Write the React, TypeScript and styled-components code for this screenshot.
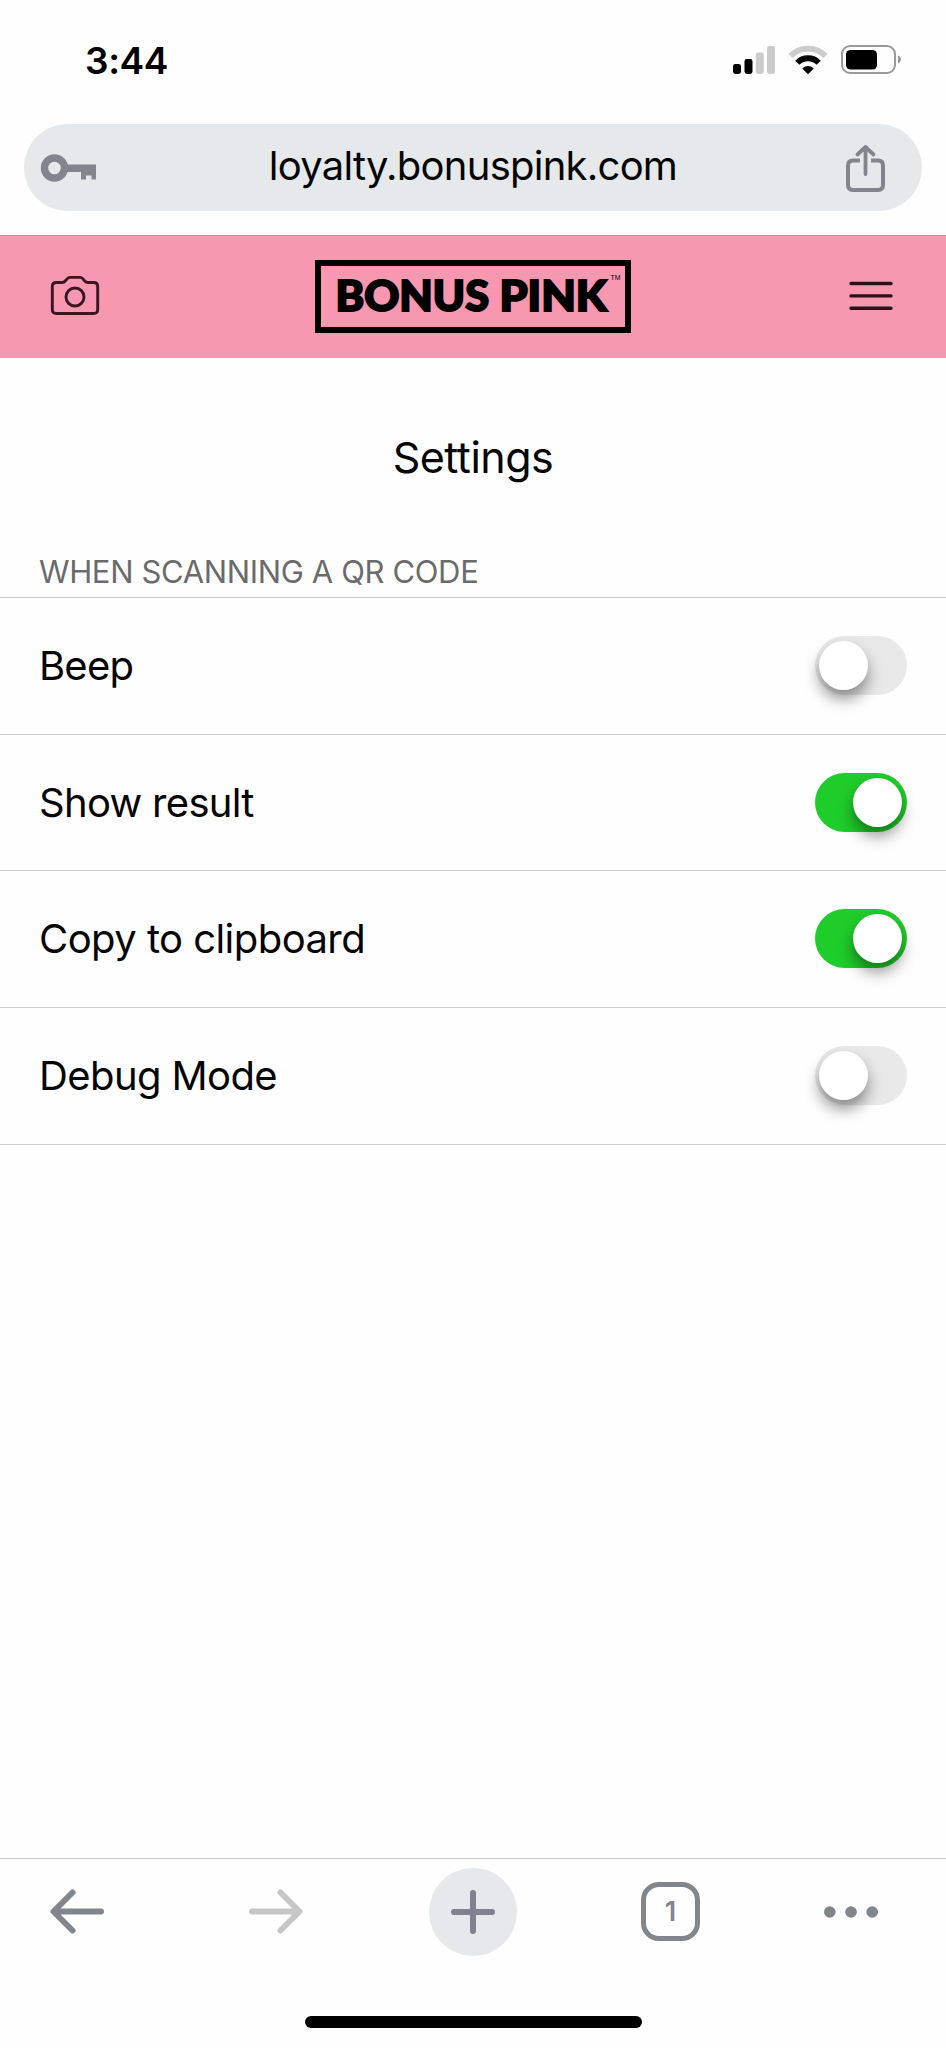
import React, { useState } from "react";
import styled, { createGlobalStyle } from "styled-components";

const GlobalStyle = createGlobalStyle`
  * { box-sizing: border-box; }
  html, body { margin: 0; padding: 0; background: #fefefe; }
  body { font-family: Inter, "Liberation Sans", sans-serif; color: #050505; }
  button { border: 0; padding: 0; background: none; font: inherit; color: inherit; }
  svg { display: block; overflow: visible; }
`;

const Screen = styled.div`
  display: flex;
  flex-direction: column;
  width: 946px;
  height: 2048px;
  overflow: hidden;
  background: #fefefe;
`;

const StatusBar = styled.div`
  display: flex;
  align-items: center;
  height: 124px;
  padding: 0 45px 5px 85px;
`;

const Clock = styled.div`
  flex: 1;
  padding-top: 2px;
  font-size: 37px;
  font-weight: 600;
  line-height: 44px;
  letter-spacing: -0.4px;
  color: #000;
`;

const StatusIcons = styled.div`
  display: flex;
  align-items: center;
  gap: 13px;
`;

const AddressBar = styled.div`
  display: flex;
  align-items: center;
  justify-content: space-between;
  height: 87px;
  margin: 0 24px;
  padding: 0 37px 0 17px;
  border-radius: 44px;
  background: #e5e9ec;
`;

const Url = styled.div`
  padding: 0 0 3px 4px;
  font-size: 40px;
  line-height: 48px;
  letter-spacing: -0.75px;
  white-space: nowrap;
`;

const SiteHeader = styled.header`
  display: flex;
  align-items: center;
  justify-content: space-between;
  height: 123px;
  margin-top: 24px;
  padding: 0 53px 2px 51px;
  background: #f797b0;
  border-top: 1px solid #bf8d9a;
  border-bottom: 1px solid #e3a3b3;
`;

const LogoFrame = styled.div`
  width: 316px;
  height: 73px;
  border: 6px solid #000;
  margin: 2px 0 0 -2px;
`;

const Title = styled.h1`
  margin: 73px 0 0;
  font-size: 43px;
  font-weight: 400;
  line-height: 52px;
  text-align: center;
  letter-spacing: -0.5px;
`;

const SectionLabel = styled.h2`
  margin: 70px 0 0;
  height: 45px;
  padding-left: 39px;
  border-bottom: 1px solid #c9c9c9;
  font-size: 31px;
  font-weight: 400;
  line-height: 38px;
  letter-spacing: -0.36px;
  color: #6b6b6b;
`;

const Row = styled.div<{ $h: number }>`
  display: flex;
  align-items: center;
  justify-content: space-between;
  height: ${(p) => p.$h}px;
  padding: 0 39px;
  border-bottom: 1px solid #cdcdcd;
`;

const RowLabel = styled.span<{ $track: number }>`
  font-size: 40px;
  line-height: 48px;
  letter-spacing: ${(p) => p.$track}px;
`;

const Track = styled.button<{ $on: boolean }>`
  display: flex;
  align-items: center;
  justify-content: ${(p) => (p.$on ? "flex-end" : "flex-start")};
  width: 92px;
  height: 59px;
  margin-bottom: 1px;
  padding: 0 5px 0 4px;
  border-radius: 30px;
  background: ${(p) => (p.$on ? "#1fcd2a" : "#e9e9ea")};
`;

const Knob = styled.span`
  width: 49px;
  height: 49px;
  border-radius: 50%;
  background: #fff;
  box-shadow: 0 9px 15px rgba(0, 0, 0, 0.42);
`;

const Content = styled.main`
  flex: 1;
`;

const Toolbar = styled.nav`
  display: grid;
  grid-template-columns: 198.5px 180.5px 212px 183px auto;
  align-items: center;
  height: 158px;
  padding: 0 0 52px 50px;
  border-top: 1px solid #c6c8ca;
`;

const NewTab = styled.button`
  display: flex;
  align-items: center;
  justify-content: center;
  width: 88px;
  height: 88px;
  border-radius: 50%;
  background: #e5e9ec;
`;

const TabCount = styled.button`
  display: flex;
  align-items: center;
  justify-content: center;
  width: 59px;
  height: 59px;
  padding: 1px 0 0;
  border: 5.5px solid #80868b;
  border-radius: 18px;
  font-size: 27px;
  font-weight: 600;
  line-height: 34px;
  color: #80868b;
`;

const HomeIndicator = styled.div`
  width: 337px;
  height: 12px;
  margin: 0 auto 20px;
  border-radius: 6px;
  background: #000;
`;

const Signal = () => (
  <svg width="42" height="28" viewBox="0 0 42 28">
    <rect x="0" y="18" width="8" height="10" rx="2.4" />
    <rect x="11.5" y="13" width="8" height="15" rx="2.4" />
    <rect x="22.8" y="6.5" width="8" height="21.5" rx="2.4" fill="#cbcbcb" />
    <rect x="34" y="0" width="8" height="28" rx="2.4" fill="#cbcbcb" />
  </svg>
);

const Wifi = () => (
  <svg width="40" height="29" viewBox="0 0 40 29" fill="none" strokeWidth="5.8">
    <path d="M2.6 10.9A24.3 24.3 0 0 1 37.4 10.9" stroke="#cbcbcb" />
    <path d="M9.3 17.8A14.9 14.9 0 0 1 30.7 17.8" stroke="#000" />
    <path d="M20 29.3L14.3 23.5A7.8 7.8 0 0 1 25.7 23.5Z" fill="#000" stroke="none" />
  </svg>
);

const Battery = () => (
  <svg width="60" height="29" viewBox="0 0 60 29">
    <rect x="1" y="1" width="53" height="27" rx="8" fill="none" stroke="#999" strokeWidth="2" />
    <rect x="5" y="5" width="31" height="19.5" rx="4.5" />
    <path d="M57 10.5C61 12 61 17 57 18.5Z" fill="#999" />
  </svg>
);

const KeyIcon = () => (
  <svg width="55" height="28" viewBox="0 0 55 28">
    <circle cx="13.5" cy="14" r="10" fill="none" stroke="#80868b" strokeWidth="7.4" />
    <path d="M25 10.5H55V25.5H50.5V21.5H45V25.5H40V18H25Z" fill="#80868b" />
  </svg>
);

const ShareIcon = () => (
  <svg width="39" height="45" viewBox="0 0 39 45" fill="none" stroke="#80868b" strokeWidth="4" strokeLinecap="round" strokeLinejoin="round">
    <path d="M19.5 29V3M11.5 9.5L19.5 2L27.5 9.5" strokeWidth="3.8" />
    <path strokeLinecap="butt" d="M14 15.5H7Q2 15.5 2 20.5V40Q2 45 7 45H32Q37 45 37 40V20.5Q37 15.5 32 15.5H25" />
  </svg>
);

const CameraIcon = () => (
  <svg width="48" height="39" viewBox="0 0 48 39" fill="none" stroke="#3a171f" strokeWidth="2.9" strokeLinejoin="round">
    <path d="M5.5 6.5H11Q13 6.5 14.2 5L16.3 2.6Q17.3 1.4 19 1.4H29Q30.7 1.4 31.7 2.6L33.8 5Q35 6.5 37 6.5H42.5Q46.7 6.5 46.7 10.5V33.5Q46.7 37.5 42.5 37.5H5.5Q1.3 37.5 1.3 33.5V10.5Q1.3 6.5 5.5 6.5Z" />
    <circle cx="24" cy="21" r="9" />
  </svg>
);

const MenuIcon = () => (
  <svg width="44" height="28" viewBox="0 0 44 28" stroke="#2a1218" strokeWidth="3.4" strokeLinecap="round">
    <path d="M2 1.5H42M2 13.9H42M2 26.3H42" />
  </svg>
);

const Logo = () => (
  <LogoFrame>
    <svg width="304" height="61" viewBox="0 0 304 61" fontFamily="Lato, sans-serif" fontWeight="900">
      <g fontSize="41.5" stroke="#000" strokeWidth="2">
        <text x="14.5" y="45.3" textLength="153.5" lengthAdjust="spacingAndGlyphs">BONUS</text>
        <text x="178.5" y="45.3" textLength="107.5" lengthAdjust="spacingAndGlyphs">PINK</text>
      </g>
      <text x="289.5" y="14" fontSize="7.5" fontFamily="Liberation Sans, sans-serif" fontWeight="400" textLength="10" lengthAdjust="spacingAndGlyphs">TM</text>
    </svg>
  </LogoFrame>
);

const Arrow = ({ forward = false }: { forward?: boolean }) => (
  <svg width="54" height="45" viewBox="0 0 54 45" fill="none" stroke={forward ? "#c6c6c7" : "#80868b"} strokeWidth="6" strokeLinecap="round" strokeLinejoin="round">
    {forward ? <path d="M3 22.5H50M31.5 3.5L50.5 22.5L31.5 41.5" /> : <path d="M51 22.5H4M22.5 3.5L3.5 22.5L22.5 41.5" />}
  </svg>
);

const Plus = () => (
  <svg width="44" height="44" viewBox="0 0 44 44" stroke="#7d828c" strokeWidth="6" strokeLinecap="round">
    <path d="M3 22H41M22 3V41" />
  </svg>
);

const Dots = () => (
  <svg width="54" height="12" viewBox="0 0 54 12" fill="#80868b">
    <circle cx="5.8" cy="6" r="5.8" />
    <circle cx="27" cy="6" r="5.8" />
    <circle cx="48.2" cy="6" r="5.8" />
  </svg>
);

const options = [
  { label: "Beep", on: false, height: 137, track: -0.8 },
  { label: "Show result", on: true, height: 136, track: -0.7 },
  { label: "Copy to clipboard", on: true, height: 137, track: -0.55 },
  { label: "Debug Mode", on: false, height: 137, track: -0.6 },
];

export default function App() {
  const [values, setValues] = useState(options.map((o) => o.on));
  const toggle = (i: number) => setValues((v) => v.map((on, j) => (j === i ? !on : on)));

  return (
    <Screen>
      <GlobalStyle />
      <StatusBar>
        <Clock>3:44</Clock>
        <StatusIcons>
          <Signal />
          <Wifi />
          <Battery />
        </StatusIcons>
      </StatusBar>
      <AddressBar>
        <KeyIcon />
        <Url>loyalty.bonuspink.com</Url>
        <ShareIcon />
      </AddressBar>
      <SiteHeader>
        <CameraIcon />
        <Logo />
        <MenuIcon />
      </SiteHeader>
      <Content>
        <Title>Settings</Title>
        <SectionLabel>WHEN SCANNING A QR CODE</SectionLabel>
        {options.map((o, i) => (
          <Row key={o.label} $h={o.height}>
            <RowLabel $track={o.track}>{o.label}</RowLabel>
            <Track $on={values[i]} onClick={() => toggle(i)} aria-label={o.label}>
              <Knob />
            </Track>
          </Row>
        ))}
      </Content>
      <Toolbar>
        <Arrow />
        <Arrow forward />
        <NewTab aria-label="New tab">
          <Plus />
        </NewTab>
        <TabCount>1</TabCount>
        <Dots />
      </Toolbar>
      <HomeIndicator />
    </Screen>
  );
}
